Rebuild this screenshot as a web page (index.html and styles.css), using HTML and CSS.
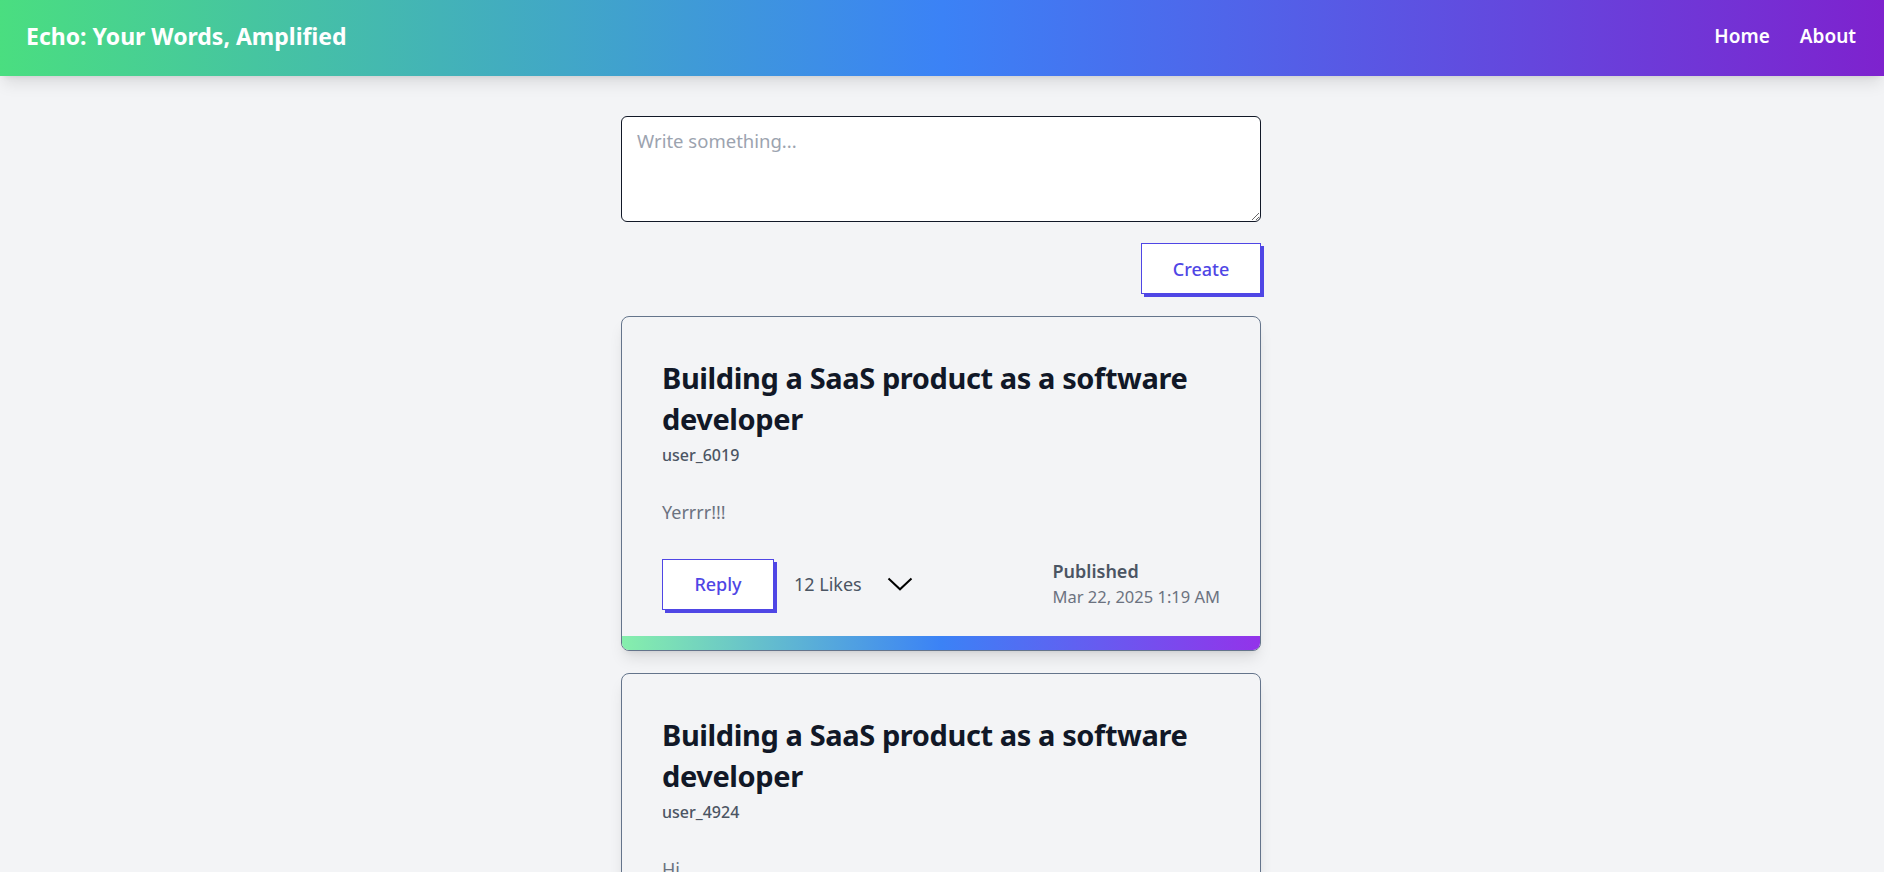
FILE: index.html
```html
<!DOCTYPE html>
<html lang="en">
<head>
<meta charset="utf-8">
<title>Echo: Your Words, Amplified</title>
<link rel="stylesheet" href="styles.css">
</head>
<body>
<header class="topbar">
  <div class="brand">Echo: Your Words, Amplified</div>
  <nav class="nav">
    <a class="nav-link" href="#">Home</a>
    <a class="nav-link" href="#">About</a>
  </nav>
</header>
<main class="feed">
  <textarea class="composer" placeholder="Write something..."></textarea>
  <div class="composer-actions">
    <button class="btn btn-create">Create</button>
  </div>

  <article class="card">
    <div class="card-body">
      <h2 class="card-title">Building a SaaS product as a software developer</h2>
      <div class="card-user">user_6019</div>
      <p class="card-text">Yerrrr!!!</p>
      <div class="card-footer">
        <div class="card-actions">
          <button class="btn btn-reply">Reply</button>
          <span class="likes">12 Likes</span>
          <svg class="chevron" width="26" height="14" viewBox="0 0 26 14"><polyline points="1.5,1.5 13,12.3 24.5,1.5" fill="none" stroke="#000" stroke-width="2"/></svg>
        </div>
        <div class="card-meta">
          <div class="meta-label">Published</div>
          <div class="meta-date">Mar 22, 2025 1:19 AM</div>
        </div>
      </div>
    </div>
    <div class="card-bar"></div>
  </article>

  <article class="card">
    <div class="card-body">
      <h2 class="card-title">Building a SaaS product as a software developer</h2>
      <div class="card-user">user_4924</div>
      <p class="card-text">Hi</p>
      <div class="card-footer">
        <div class="card-actions">
          <button class="btn btn-reply">Reply</button>
          <span class="likes">3 Likes</span>
          <svg class="chevron" width="26" height="14" viewBox="0 0 26 14"><polyline points="1.5,1.5 13,12.3 24.5,1.5" fill="none" stroke="#000" stroke-width="2"/></svg>
        </div>
        <div class="card-meta">
          <div class="meta-label">Published</div>
          <div class="meta-date">Mar 22, 2025 1:10 AM</div>
        </div>
      </div>
    </div>
    <div class="card-bar"></div>
  </article>
</main>
</body>
</html>
```

FILE: styles.css
```css
* { box-sizing: border-box; }
html, body { margin: 0; padding: 0; }
body {
  background: #f3f4f6;
  font-family: "Noto Sans", "Open Sans", sans-serif;
  color: #111827;
}
.topbar {
  height: 76px;
  display: flex;
  align-items: center;
  justify-content: space-between;
  padding: 0 28px 4px 26px;
  background: linear-gradient(to right, #4ade80, #3b82f6 50%, #7e22ce);
  box-shadow: 0 10px 15px -3px rgba(0,0,0,0.1), 0 4px 6px -4px rgba(0,0,0,0.1);
  position: relative;
  z-index: 1;
}
.brand {
  color: #fff;
  font-size: 23px;
  font-weight: 700;
}
.nav { display: flex; gap: 30px; }
.nav-link {
  color: #fff;
  text-decoration: none;
  font-size: 19px;
  font-weight: 600;
}
.feed {
  width: 642px;
  padding-right: 2px;
  margin: 40px auto 0;
}
.composer {
  display: block;
  width: 100%;
  height: 106px;
  border: 1px solid #111827;
  border-radius: 6px;
  background: #fff;
  padding: 11px 15px;
  font-family: inherit;
  font-size: 18.5px;
  color: #111827;
  resize: vertical;
  outline: none;
}
.composer::placeholder { color: #9ca3af; }
.composer-actions {
  display: flex;
  justify-content: flex-end;
  margin-top: 21px;
  margin-bottom: 22px;
}
.btn {
  background: #fff;
  border: 1.5px solid #4f46e5;
  color: #4f46e5;
  font-family: inherit;
  font-size: 18px;
  font-weight: 500;
  height: 51px;
  padding: 0;
  box-shadow: 3px 3px 0 #4f46e5;
  cursor: pointer;
}
.btn-create { width: 120px; }
.btn-reply { width: 112px; }
.card {
  border: 1px solid #64748b;
  border-radius: 8px;
  background: #f3f4f6;
  overflow: hidden;
  box-shadow: 0 10px 15px -3px rgba(0,0,0,0.1), 0 4px 6px -4px rgba(0,0,0,0.1);
  margin-bottom: 22px;
}
.card-body { padding: 40px 40px 26px; }
.card-title {
  margin: 0;
  font-size: 29px;
  line-height: 41px;
  font-weight: 700;
  color: #111827;
  letter-spacing: -0.4px;
}
.card-user {
  margin-top: 5px;
  font-size: 16px;
  line-height: 22px;
  font-weight: 500;
  color: #4b5563;
}
.card-text {
  margin: 32px 0 0;
  font-size: 18px;
  line-height: 28px;
  color: #6b7280;
}
.card-footer {
  margin-top: 32px;
  display: flex;
  align-items: center;
  justify-content: space-between;
}
.card-actions {
  display: flex;
  align-items: center;
}
.likes {
  margin-left: 20px;
  font-size: 18px;
  color: #4b5563;
}
.chevron { margin-left: 25px; display: block; }
.meta-label {
  font-size: 18px;
  line-height: 26px;
  font-weight: 600;
  color: #4b5563;
}
.meta-date {
  font-size: 16.5px;
  line-height: 26px;
  color: #6b7280;
}
.card-bar {
  height: 14px;
  background: linear-gradient(to right, #86efac, #3b82f6 50%, #9333ea);
}
```
